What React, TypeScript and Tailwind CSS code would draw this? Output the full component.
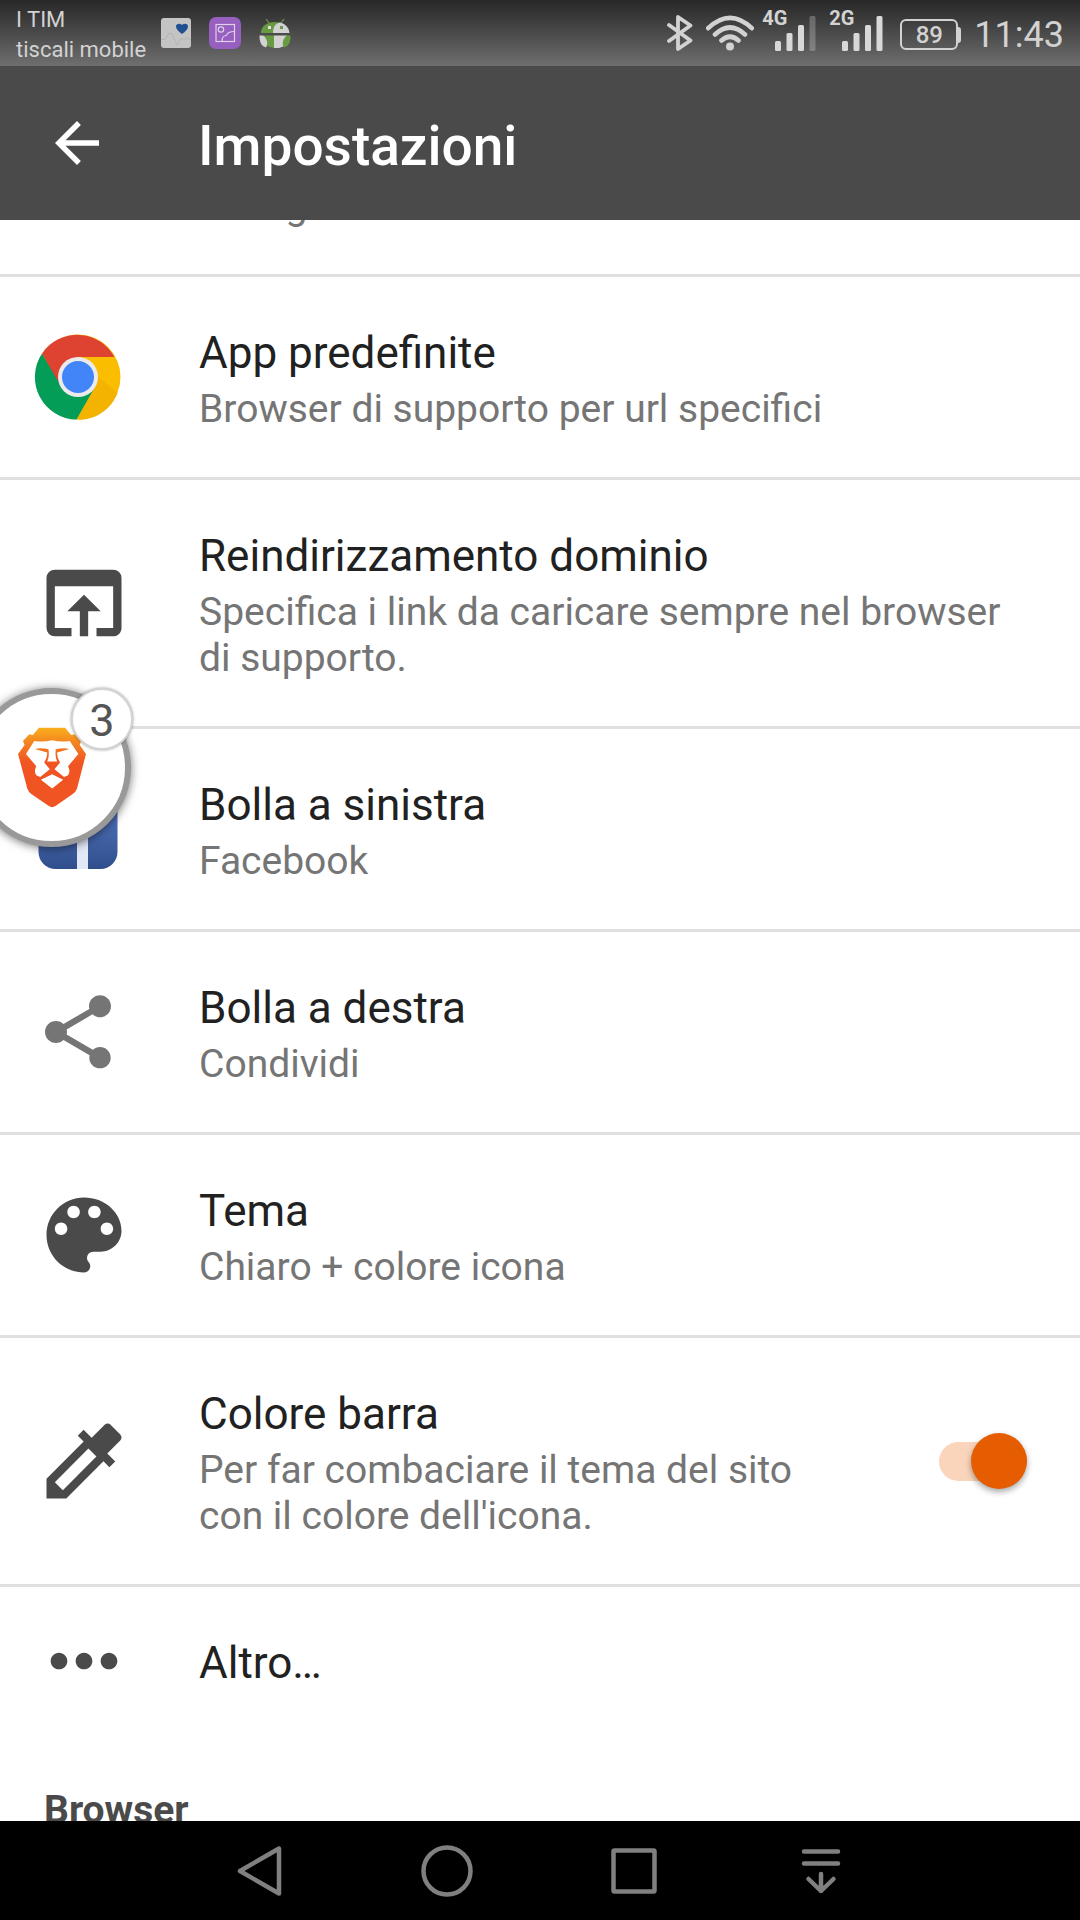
import { useState } from 'react'
import type { ReactNode } from 'react'
import { MdArrowBack, MdOpenInBrowser, MdShare, MdMoreHoriz } from 'react-icons/md'

interface RowProps {
  icon?: ReactNode
  title: string
  summary?: string
  action?: ReactNode
  last?: boolean
}

function StatusBar() {
  return (
    <div className="flex h-[66px] shrink-0 items-center justify-between bg-linear-to-b from-[#282828] to-[#6f6f6f] px-4 text-[#d2d2d2]">
      <div className="flex items-center">
        <div className="w-[145px] pt-1 text-[22px] leading-[30px] whitespace-nowrap">
          <div>I TIM</div>
          <div>tiscali mobile</div>
        </div>
        <div className="flex items-center gap-[18px]">
          <HealthIcon />
          <GalleryIcon />
          <AndroidIcon />
        </div>
      </div>
      <div className="flex items-center">
        <BluetoothIcon />
        <WifiIcon />
        <Signal label="4G" level={3} />
        <Signal label="2G" level={4} />
        <div className="ml-1 flex items-center pt-[3px]">
          <div className="flex h-[31px] w-[58px] items-center justify-center rounded-md border-2 border-[#d2d2d2] text-2xl font-medium">
            89
          </div>
          <div className="h-4 w-[3px] rounded-r-sm bg-[#d2d2d2]" />
        </div>
        <div className="ml-[13px] pt-[3px] text-4xl">11:43</div>
      </div>
    </div>
  )
}

function Signal({ label, level }: { label: string; level: number }) {
  return (
    <div className="flex h-[42px] w-[67px] items-start">
      <span className="w-3 text-xl leading-3 font-bold">{label}</span>
      <svg viewBox="0 0 42 40" className="h-10 w-[42px] shrink-0" fill="#d8d8d8">
        {[10, 18, 26, 35].map((h, i) => (
          <rect key={h} x={1 + i * 11.5} y={39 - h} width="6" height={h} rx="1.5" opacity={i < level ? 1 : 0.3} />
        ))}
      </svg>
    </div>
  )
}

function BluetoothIcon() {
  return (
    <svg viewBox="0 0 26 38" className="mr-[13px] h-[38px] w-[26px]" fill="none" stroke="#d2d2d2" strokeWidth="3.8" strokeLinejoin="round" strokeLinecap="round">
      <path d="M2 11 L23.500 26.500 L11 35 V3 L23.500 11.500 L2 27" />
    </svg>
  )
}

function WifiIcon() {
  return (
    <svg viewBox="0 0 48 36" className="mr-2 h-9 w-12" fill="none" stroke="#d2d2d2" strokeWidth="4.6">
      <path d="M2.200 13.200 Q24 -7.400 45.800 13.200 M9 19.500 Q24 5.500 39 19.500 M15.500 25.500 Q24 18 32.500 25.500" strokeLinecap="round" />
      <circle cx="24" cy="31.500" r="4" fill="#d2d2d2" stroke="none" />
    </svg>
  )
}

function HealthIcon() {
  return (
    <svg viewBox="0 0 30 30" className="size-[30px]">
      <rect width="30" height="30" rx="3" fill="#c4c4c4" />
      <path d="M0 21.500 H4 L8 15 L11 16 L16 27 L20 20 L23 22 L26 20 L30 22" fill="none" stroke="#a8a8a8" strokeWidth="0.600" />
      <path d="M21 16 C17 13 15 11 15 8.500 C15 5.500 19 5 21 7 C23 5 27 5.500 27 8.500 C27 11 25 13 21 16Z" fill="#20508f" />
    </svg>
  )
}

function GalleryIcon() {
  return (
    <svg viewBox="0 0 32 32" className="size-8">
      <rect width="32" height="32" rx="7" fill="#965fc0" />
      <g fill="none" stroke="#ddd0e8" strokeWidth="1.200">
        <rect x="7" y="7.500" width="18.500" height="17" />
        <circle cx="12" cy="12.500" r="2.700" />
        <path d="M13 24.500 C13 20 14.500 18.500 17.500 18.500 C18 16 21 14.500 25.500 14.500" />
      </g>
    </svg>
  )
}

function AndroidIcon() {
  return (
    <svg viewBox="0 0 32 32" className="size-8">
      <path d="M7 2 L10 6 M25 2 L22 6" stroke="#689a41" strokeWidth="1.200" />
      <path d="M2 16 C2 9 8 5 16 5 L22 6 L14 16Z" fill="#689a41" />
      <path d="M14 16 C14 11 16 6 21 5.500 C27 7 30 11 30.500 16Z" fill="#d2d2d2" />
      <rect x="9" y="9" width="3" height="3" fill="#e0e0e0" />
      <rect x="21" y="9" width="3" height="3" fill="#689a41" />
      <path d="M4 18.500 H15 V31 C12 30 8 30 6 27Z" fill="#689a41" />
      <path d="M15 18.500 H28 V28 L20 31 H15Z" fill="#d2d2d2" />
      <path d="M0.500 18.500 H4 C8 21 9.500 27 7 30.500 C2 29 0.500 25 0.500 18.500Z" fill="#d2d2d2" />
      <path d="M31.500 18.500 H28 C24 21 22.500 27 25 30.500 C30 29 31.500 25 31.500 18.500Z" fill="#689a41" />
    </svg>
  )
}

function ChromeIcon() {
  return (
    <svg viewBox="0 0 88 88" className="size-[88px]">
      <circle cx="44" cy="44" r="42.500" fill="#fbbd00" />
      <path d="M62 42 L83.500 60 C77 77 60 88 43 86.500 L56 62Z" fill="#f3b300" />
      <path d="M8 20.500 A42.500 42.500 0 0 0 42.500 86.500 L62 52 L26 50Z" fill="#049d58" />
      <path d="M8 20.500 A42.500 42.500 0 0 1 80.500 24 H44 L25 50Z" fill="#de4332" />
      <circle cx="44" cy="44" r="20" fill="#ebebeb" />
      <circle cx="44" cy="44" r="16" fill="#4285f8" />
    </svg>
  )
}

function FacebookIcon() {
  return (
    <svg viewBox="0 0 88 88" className="size-[88px]">
      <defs>
        <linearGradient id="fb" x1="0" y1="0" x2="0" y2="1">
          <stop offset="0" stopColor="#5b7fcb" />
          <stop offset="1" stopColor="#304e8c" />
        </linearGradient>
      </defs>
      <rect x="4.500" y="5" width="79" height="79" rx="17" fill="url(#fb)" />
      <path d="M43 84 V44 H33 V33 H43 V28 C43 19 48 15 57 15 H64 V25 H59 C55 25 54 27 54 30 V33 H64 L62 44 H54 V84Z" fill="#e2e8f6" />
    </svg>
  )
}

function PaletteIcon() {
  return (
    <svg viewBox="0 0 24 24" className="size-[100px]" fill="#4a4a4a">
      <path d="M12 3c-4.970 0-9 4.030-9 9s4.030 9 9 9c.830 0 1.500-.670 1.500-1.500 0-.390-.150-.740-.390-1.010-.230-.260-.380-.610-.380-.990 0-.830.670-1.500 1.500-1.500H16c2.760 0 5-2.240 5-5 0-4.420-4.030-8-9-8zm-5.500 9c-.830 0-1.500-.670-1.500-1.500S5.670 9 6.500 9 8 9.670 8 10.500 7.330 12 6.500 12zm3-4C8.670 8 8 7.330 8 6.500S8.670 5 9.500 5s1.500.670 1.500 1.500S10.330 8 9.500 8zm5 0c-.830 0-1.500-.670-1.500-1.500S13.670 5 14.500 5s1.500.670 1.500 1.500S15.330 8 14.500 8zm3 4c-.830 0-1.500-.670-1.500-1.500S16.670 9 17.500 9s1.500.670 1.500 1.500-.670 1.500-1.500 1.500z" />
    </svg>
  )
}

function DropperIcon() {
  return (
    <svg viewBox="0 0 24 24" className="size-[100px]" fill="#4a4a4a">
      <path d="M20.710 5.630l-2.340-2.340c-.390-.390-1.020-.390-1.410 0l-3.120 3.120-1.930-1.910-1.410 1.410 1.420 1.420L3 16.250V21h4.750l8.920-8.920 1.420 1.420 1.410-1.410-1.920-1.920 3.120-3.120c.400-.400.400-1.030.010-1.420zM6.920 19L5 17.080l8.060-8.060 1.920 1.920L6.920 19z" />
    </svg>
  )
}

function Row({ icon, title, summary, action, last }: RowProps) {
  return (
    <li className={last ? 'flex items-center pl-[34px]' : 'flex items-center border-b-[3px] border-[#e0e0e0] pl-[34px]'}>
      <div className="w-[165px] shrink-0">{icon}</div>
      <div className="flex-1 pt-[49px] pr-12 pb-[45px]">
        <div className="text-[44px] leading-[54px] text-[#212121]">{title}</div>
        {summary && <div className="mt-[6px] text-[39px] leading-[46px] text-[#757575]">{summary}</div>}
      </div>
      {action}
    </li>
  )
}

function Bubble() {
  return (
    <button
      aria-label="Brave, 3 pagine"
      className="absolute top-[688px] left-[-28px] flex size-[159px] items-center justify-center rounded-full border-6 border-[#999] bg-white shadow-[0_1px_10px_rgba(0,0,0,0.55)]"
    >
      <svg viewBox="54 171 205 242" className="h-[81px] w-[68px]">
        <defs>
          <linearGradient id="lion" x1="0" y1="0" x2="0" y2="1">
            <stop offset="0" stopColor="#f9b01c" />
            <stop offset="0.200" stopColor="#f48120" />
            <stop offset="0.450" stopColor="#f05423" />
          </linearGradient>
        </defs>
        <path d="M117 172 H196 L214 194 L225 192 L244 212 L240 224 L259 251 L232 355 Q228 366 219 372 L167 408 Q157 415 147 408 L94 372 Q86 366 82 355 L54 251 L74 224 L69 212 L88 192 L99 194Z" fill="url(#lion)" />
        <path d="M103 212 Q130 216 157 210 Q184 216 210 212 L236 251 L205 288 Q213 304 205 315 L193 321 L164 297 L181 277 Q171 262 172 247 L209 236 Q190 231 168 237 Q165 262 172 274 H142 Q149 262 146 237 Q124 231 105 236 L142 247 Q143 262 133 277 L150 297 L121 321 L109 315 Q101 304 109 288 L78 251Z M157 312 L190 329 L157 355 L123 329Z" fill="#fff" />
      </svg>
      <span className="absolute -top-[6px] right-[-8px] flex size-[62px] items-center justify-center rounded-full border-2 border-[#d4d4d4] bg-white pt-1 text-[45px] text-[#555] shadow-[0_0_3px_rgba(0,0,0,0.4)]">
        3
      </span>
    </button>
  )
}

function NavBar() {
  return (
    <nav className="flex h-[99px] shrink-0 items-center justify-center bg-black">
      <button aria-label="Indietro" className="flex w-[187px] justify-center">
        <svg viewBox="0 0 56 56" className="size-14" fill="none" stroke="#808080" strokeWidth="4.500" strokeLinejoin="round">
          <path d="M47 5.500 V50.500 L8 28Z" />
        </svg>
      </button>
      <button aria-label="Home" className="flex w-[187px] justify-center">
        <svg viewBox="0 0 56 56" className="size-14" fill="none" stroke="#808080" strokeWidth="4.500">
          <circle cx="28" cy="28" r="23.500" />
        </svg>
      </button>
      <button aria-label="Recenti" className="flex w-[187px] justify-center">
        <svg viewBox="0 0 56 56" className="size-14" fill="none" stroke="#808080" strokeWidth="4.500" strokeLinejoin="round">
          <rect x="7.500" y="7.500" width="41" height="41" rx="1" />
        </svg>
      </button>
      <button aria-label="Notifiche" className="flex w-[187px] justify-center">
        <svg viewBox="0 0 56 56" className="size-14" fill="none" stroke="#808080" strokeWidth="4.500" strokeLinecap="round" strokeLinejoin="round">
          <path d="M11 8.500 H45 M11 20.500 H45 M28 31 V48 M15.500 36 L28 48 L40.500 36" />
        </svg>
      </button>
    </nav>
  )
}

export default function App() {
  const [colorBar, setColorBar] = useState(true)

  return (
    <div className="relative flex h-screen flex-col overflow-hidden bg-white font-[Roboto,sans-serif]">
      <StatusBar />
      <header className="flex h-[154px] shrink-0 items-center bg-[#4a4a4a] pl-11 text-white">
        <button aria-label="Indietro" className="w-[154px]">
          <MdArrowBack size={66} />
        </button>
        <h1 className="pt-[6px] text-[55px] leading-[64px] font-medium">Impostazioni</h1>
      </header>

      <main className="min-h-0 flex-1 overflow-hidden">
        {/* list is scrolled, the first row ends just under the toolbar */}
        <ul className="-mt-[37px]">
          <li className="border-b-[3px] border-[#e0e0e0] pb-[45px] pl-[199px] text-[39px] leading-[46px] text-[#757575]">
            Assegna
          </li>
          <Row icon={<ChromeIcon />} title="App predefinite" summary="Browser di supporto per url specifici" />
          <Row
            icon={<MdOpenInBrowser size={100} color="#4a4a4a" />}
            title="Reindirizzamento dominio"
            summary="Specifica i link da caricare sempre nel browser di supporto."
          />
          <Row icon={<FacebookIcon />} title="Bolla a sinistra" summary="Facebook" />
          <Row icon={<MdShare size={88} color="#757575" />} title="Bolla a destra" summary="Condividi" />
          <Row icon={<PaletteIcon />} title="Tema" summary="Chiaro + colore icona" />
          <Row
            icon={<DropperIcon />}
            title="Colore barra"
            summary="Per far combaciare il tema del sito con il colore dell'icona."
            action={
              <input
                type="checkbox"
                role="switch"
                aria-label="Colore barra"
                checked={colorBar}
                onChange={e => setColorBar(e.target.checked)}
                className="mr-[53px] ml-20 flex h-[39px] w-[88px] shrink-0 appearance-none items-center rounded-full bg-[#ddd] before:size-14 before:shrink-0 before:rounded-full before:bg-[#f1f1f1] before:shadow-[0_3px_6px_rgba(0,0,0,0.35)] checked:justify-end checked:bg-[#fad5bc] checked:before:bg-[#e65c00]"
              />
            }
          />
          <Row icon={<MdMoreHoriz size={100} color="#4a4a4a" />} title="Altro…" last />
        </ul>
        <h2 className="mt-[52px] pl-11 text-[39px] leading-[46px] font-bold text-[#4a4a4a]">Browser</h2>
      </main>

      <NavBar />
      <Bubble />
    </div>
  )
}
